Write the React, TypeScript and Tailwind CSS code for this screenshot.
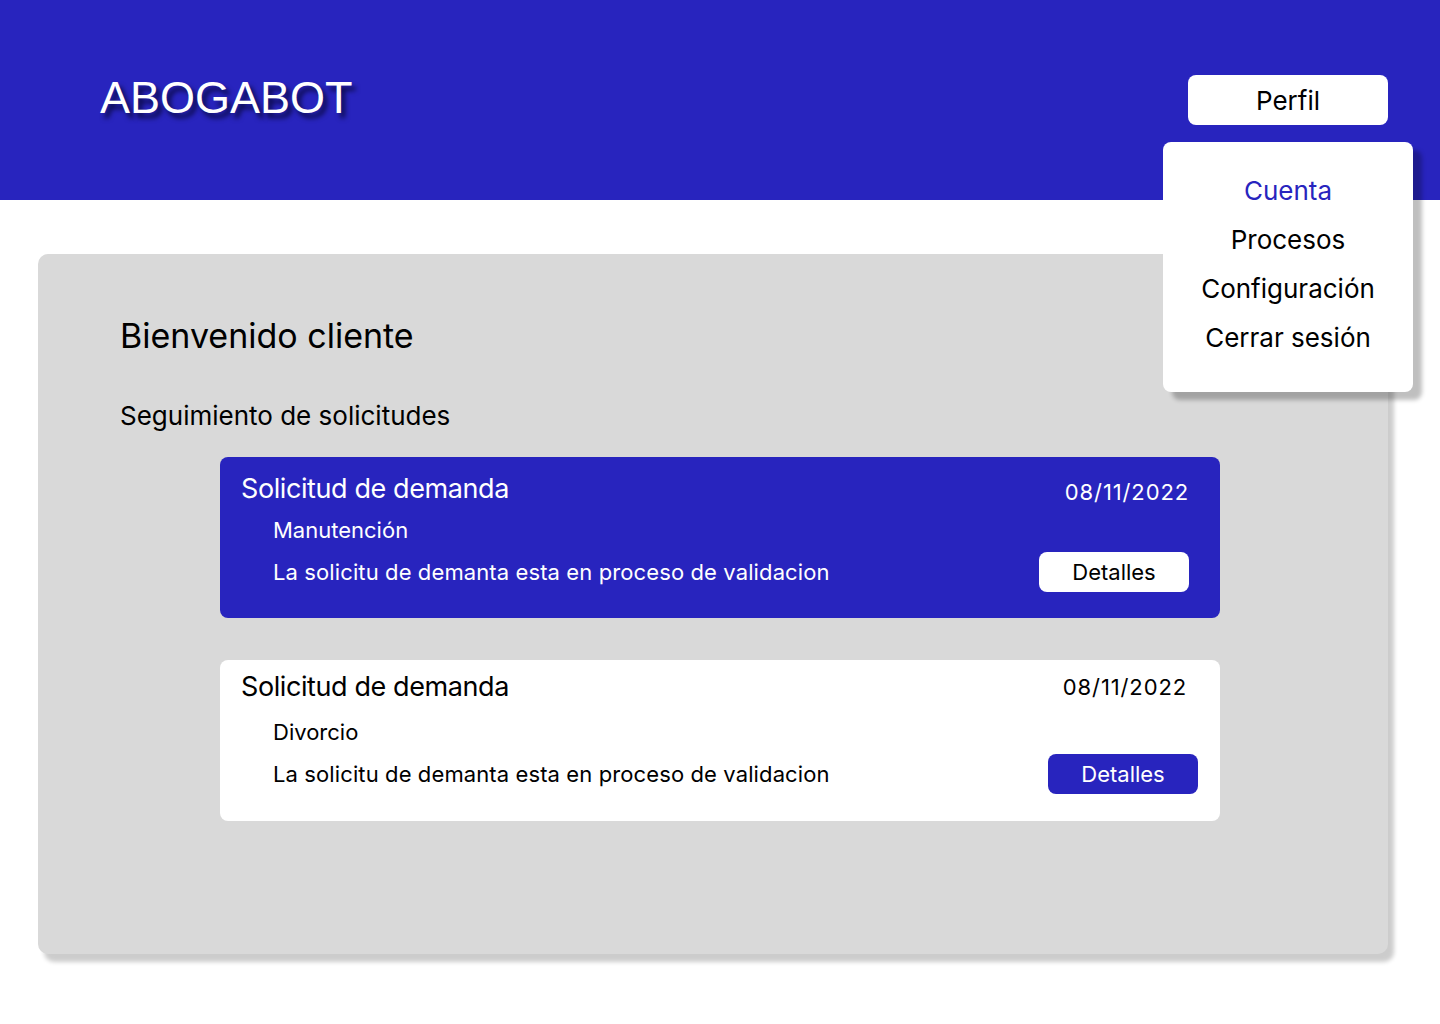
const solicitudes = [
  {
    titulo: 'Solicitud de demanda',
    fecha: '08/11/2022',
    tipo: 'Manutención',
    estado: 'La solicitu de demanta esta en proceso de validacion',
    activa: true,
  },
  {
    titulo: 'Solicitud de demanda',
    fecha: '08/11/2022',
    tipo: 'Divorcio',
    estado: 'La solicitu de demanta esta en proceso de validacion',
    activa: false,
  },
]

const menu = ['Cuenta', 'Procesos', 'Configuración', 'Cerrar sesión']

const App = () => {
  return (
    <div className="relative min-h-[1024px] w-[1440px] bg-white font-['Inter',sans-serif] text-black">
      <header className="flex h-[200px] items-start justify-between bg-[#2824BE] pl-[100px] pr-[52px] pt-[72px]">
        <h1 className="font-['Liberation_Sans',Arial,sans-serif] text-[45px] leading-[52px] text-white [text-shadow:4px_5px_5px_rgba(0,0,30,0.75)]">
          ABOGABOT
        </h1>
        <button className="mt-[3px] h-[50px] w-[200px] rounded-lg bg-white text-[26px] text-black">
          Perfil
        </button>
      </header>

      {/* menu de perfil */}
      <div className="absolute left-[1163px] top-[142px] flex h-[250px] w-[250px] flex-col items-center rounded-lg bg-white pt-[24px] shadow-[9px_8px_4px_rgba(0,0,0,0.25)]">
        {menu.map((item, i) => (
          <div
            key={item}
            className={`text-[26px] leading-[49px] ${i === 0 ? 'text-[#2824BE]' : 'text-black'}`}
          >
            {item}
          </div>
        ))}
      </div>

      <main className="ml-[38px] mt-[54px] h-[700px] w-[1350px] rounded-[10px] bg-[#D9D9D9] pl-[82px] pt-[58px] shadow-[6px_8px_4px_rgba(0,0,0,0.2)]">
        <h2 className="text-[34px] leading-[48px]">Bienvenido cliente</h2>
        <h3 className="mt-[38px] text-[26px] leading-[36px]">Seguimiento de solicitudes</h3>

        <div className="ml-[100px] mt-[23px] flex w-[1000px] flex-col gap-[42px]">
          {solicitudes.map((s, i) => (
            <div
              key={i}
              className={`h-[161px] rounded-lg pl-[21px] ${
                s.activa ? 'bg-[#2824BE] pr-[31px] text-white' : 'bg-white pr-[22px] text-black'
              }`}
            >
              <div className={`flex items-center justify-between ${s.activa ? 'pt-[12px]' : 'pt-[10px]'}`}>
                <span className="text-[27px] leading-[34px] tracking-[-0.015em]">{s.titulo}</span>
                <span
                  className={`text-[22px] leading-[34px] tracking-[0.04em] ${s.activa ? 'pt-[6px]' : 'pr-[11px]'}`}
                >
                  {s.fecha}
                </span>
              </div>
              <div className={`pl-[32px] text-[22px] leading-[30px] ${s.activa ? 'mt-[6px]' : 'mt-[13px]'}`}>
                {s.tipo}
              </div>
              <div className="mt-[7px] flex items-center justify-between pl-[32px]">
                <span className="text-[22px] leading-[40px] tracking-[0.005em]">{s.estado}</span>
                <button
                  className={`h-[40px] w-[150px] rounded-lg text-[22px] ${
                    s.activa ? 'bg-white text-black' : 'bg-[#2824BE] text-white'
                  }`}
                >
                  Detalles
                </button>
              </div>
            </div>
          ))}
        </div>
      </main>
    </div>
  )
}

export default App
